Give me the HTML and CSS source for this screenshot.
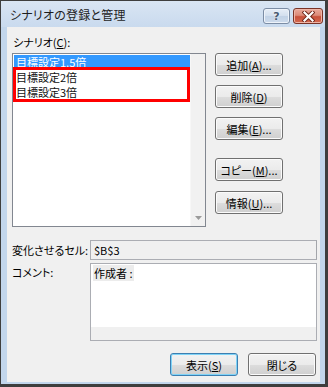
FILE: index.html
```html
<!DOCTYPE html>
<html lang="ja">
<head>
  <meta charset="UTF-8">
  <title>シナリオの登録と管理</title>
  <link rel="stylesheet" href="styles.css">
</head>
<body>
  <div class="window">
    <div class="titlebar">
      <span class="title">シナリオの登録と管理</span>
      <div class="caption-buttons">
        <span class="cap help">?</span>
        <span class="cap close">
          <svg width="13" height="11" viewBox="0 0 13 11">
            <path d="M2.5 1.5 L10.5 9.5 M10.5 1.5 L2.5 9.5" stroke="#6b2418" stroke-width="4" stroke-linecap="square"/>
            <path d="M2.5 1.5 L10.5 9.5 M10.5 1.5 L2.5 9.5" stroke="#ffffff" stroke-width="2.2" stroke-linecap="square"/>
          </svg>
        </span>
      </div>
    </div>
    <div class="client">
      <div class="label-top">シナリオ(<u>C</u>):</div>
      <div class="main-row">
        <div class="listbox">
          <div class="items">
            <div class="item selected">目標設定1.5倍</div>
            <div class="item">目標設定2倍</div>
            <div class="item">目標設定3倍</div>
          </div>
          <div class="vscroll">
            <svg width="7" height="4" viewBox="0 0 7 4"><path d="M0 0 H7 L3.5 4 Z" fill="#9a9a9a"/></svg>
          </div>
          <div class="mark"></div>
        </div>
        <div class="side-buttons">
          <div class="btn-group">
            <button class="btn">追加(<u>A</u>)...</button>
            <button class="btn">削除(<u>D</u>)</button>
            <button class="btn">編集(<u>E</u>)...</button>
          </div>
          <div class="btn-group second">
            <button class="btn">コピー(<u>M</u>)...</button>
            <button class="btn">情報(<u>U</u>)...</button>
          </div>
        </div>
      </div>
      <div class="field-row">
        <span class="field-label">変化させるセル:</span>
        <div class="cell-input">$B$3</div>
      </div>
      <div class="field-row comment-row">
        <span class="field-label">コメント:</span>
        <div class="comment-box">
          <div class="comment-text"><span class="author">作成者 :</span></div>
          <div class="hstrip"></div>
        </div>
      </div>
      <div class="bottom-buttons">
        <button class="btn default">表示(<u>S</u>)</button>
        <button class="btn">閉じる</button>
      </div>
    </div>
  </div>
</body>
</html>
```

FILE: styles.css
```css
body {
  margin: 0;
  font-family: "Noto Sans CJK JP", "Noto Sans", sans-serif;
  font-size: 11px;
  font-feature-settings: "palt";
  color: #000000;
  background: #ffffff;
}
.window {
  width: 328px;
  height: 387px;
  box-sizing: border-box;
  border-style: solid;
  border-color: #3e3e3e;
  border-width: 1px 3px 3px 1px;
  background: #c2d6ec;
  padding: 0 5px 2px 6px;
  display: flex;
  flex-direction: column;
}
.titlebar {
  height: 26px;
  flex: none;
  display: flex;
  align-items: flex-start;
  justify-content: space-between;
  background: linear-gradient(#d9e5f3, #c9daee);
  margin: 0 -5px 0 -6px;
  padding: 0 2px 0 9px;
}
.title {
  font-size: 12px;
  line-height: 14px;
  margin-top: 7px;
  color: #1e1e1e;
  letter-spacing: 0.2px;
}
.caption-buttons {
  display: flex;
  gap: 3px;
  margin-top: 7px;
}
.cap {
  height: 16px;
  box-sizing: border-box;
  border-radius: 3px;
  display: flex;
  align-items: center;
  justify-content: center;
}
.help {
  width: 27px;
  border: 1px solid #7c8da5;
  background: linear-gradient(#e7eef7 0%, #d3dfee 50%, #c2d2e6 51%, #cddbec 100%);
  box-shadow: inset 0 0 0 1px #eef3fa;
  font-family: "DejaVu Sans", sans-serif;
  font-weight: bold;
  font-size: 11px;
  color: #4a5a70;
  text-shadow: 0 0 2px #ffffff;
}
.close {
  width: 30px;
  border: 1px solid #7a3326;
  background: linear-gradient(#e9a99b 0%, #dc8a78 45%, #c8503a 55%, #d36a50 100%);
  box-shadow: inset 0 0 0 1px #eeb5a7;
}
.client {
  flex: 1;
  background: #f0f0f0;
  display: flex;
  flex-direction: column;
  padding: 0 3px 0 5px;
}
.label-top {
  margin: 8px 0 0 1px;
  line-height: 15px;
}
u {
  text-decoration-thickness: 1px;
  text-underline-offset: 1px;
}
.main-row {
  display: flex;
  margin-top: 3px;
  align-items: flex-start;
}
.listbox {
  width: 194px;
  height: 174px;
  box-sizing: border-box;
  border: 1px solid #828790;
  background: #ffffff;
  position: relative;
  display: flex;
}
.items {
  flex: 1;
  padding: 1px 0 0 1px;
}
.item {
  height: 15px;
  line-height: 15px;
  padding-left: 2px;
  color: #111111;
}
.item.selected {
  background: #3399ff;
  color: #ffffff;
}
.vscroll {
  width: 15px;
  background: #f1f1f1;
  border-left: 1px solid #f7f7f7;
  display: flex;
  align-items: flex-end;
  justify-content: center;
  padding-bottom: 6px;
  box-sizing: border-box;
}
.mark {
  position: absolute;
  left: 0;
  top: 13px;
  width: 177px;
  height: 35px;
  box-sizing: border-box;
  border: 3px solid #ff0000;
}
.side-buttons {
  margin-left: 9px;
  display: flex;
  flex-direction: column;
  gap: 18px;
}
.btn-group {
  display: flex;
  flex-direction: column;
  gap: 9px;
}
.btn-group.second {
  gap: 10px;
}
.btn {
  width: 68px;
  height: 23px;
  box-sizing: border-box;
  border: 1px solid #707070;
  border-radius: 3px;
  background: linear-gradient(#f2f2f2 0%, #ebebeb 50%, #dddddd 51%, #cfcfcf 100%);
  box-shadow: inset 0 0 0 1px #fbfbfb;
  font-family: inherit;
  font-size: 11px;
  font-feature-settings: "palt";
  color: #000000;
  padding: 0;
  line-height: 20px;
}
.btn.default {
  border-color: #3c7fb1;
  box-shadow: inset 0 0 0 1px #7fd3f7;
}
.field-row {
  display: flex;
  margin-top: 13px;
  align-items: center;
}
.field-label {
  width: 78px;
  flex: none;
  margin-left: 0;
  line-height: 15px;
}
.cell-input {
  width: 227px;
  height: 20px;
  box-sizing: border-box;
  border: 1px solid #abadb3;
  border-right-color: #a3a5aa;
  background: #f0f0f0;
  padding-left: 3px;
  line-height: 18px;
}
.comment-row {
  margin-top: 3px;
  align-items: flex-start;
}
.comment-row .field-label {
  margin-top: 2px;
}
.comment-box {
  width: 227px;
  height: 78px;
  box-sizing: border-box;
  border: 1px solid #abadb3;
  background: #ffffff;
  display: flex;
  flex-direction: column;
}
.comment-text {
  flex: 1;
  padding: 2px 0 0 2px;
  line-height: 15px;
}
.author {
  background: #ececec;
  padding: 0 1px;
}
.hstrip {
  height: 13px;
  background: #f0f0f0;
}
.bottom-buttons {
  display: flex;
  justify-content: flex-end;
  gap: 10px;
  margin-top: 12px;
  padding-right: 1px;
}
```
